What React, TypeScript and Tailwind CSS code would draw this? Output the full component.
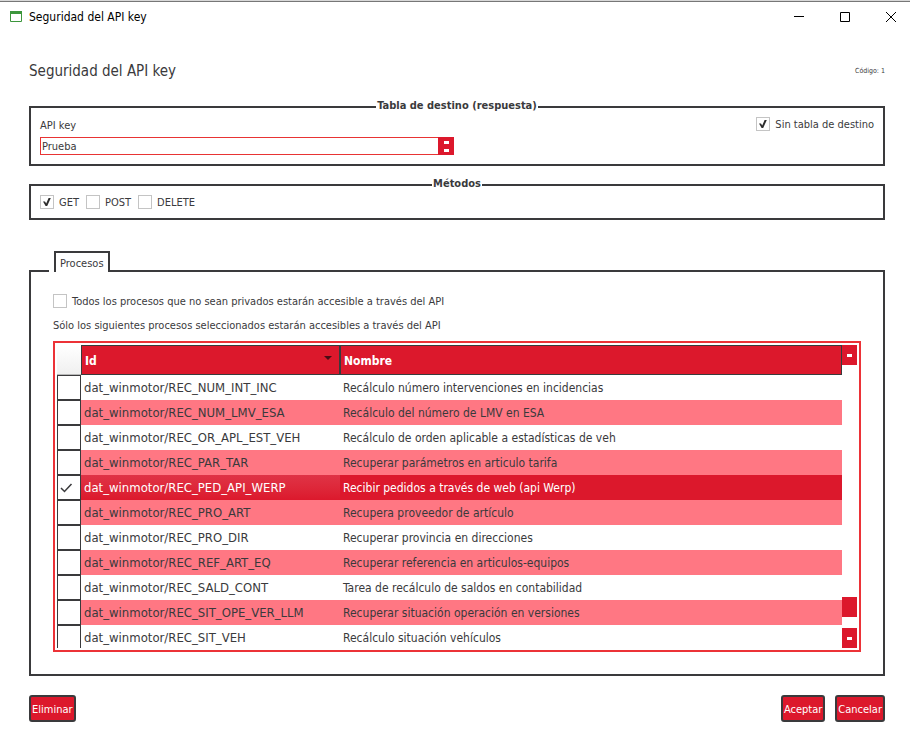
import { useState } from "react";
import type { ReactNode } from "react";

const processes = [
  { id: "dat_winmotor/REC_NUM_INT_INC", name: "Recálculo número intervenciones en incidencias" },
  { id: "dat_winmotor/REC_NUM_LMV_ESA", name: "Recálculo del número de LMV en ESA" },
  { id: "dat_winmotor/REC_OR_APL_EST_VEH", name: "Recálculo de orden aplicable a estadísticas de veh" },
  { id: "dat_winmotor/REC_PAR_TAR", name: "Recuperar parámetros en articulo tarifa" },
  { id: "dat_winmotor/REC_PED_API_WERP", name: "Recibir pedidos a través de web (api Werp)" },
  { id: "dat_winmotor/REC_PRO_ART", name: "Recupera proveedor de artículo" },
  { id: "dat_winmotor/REC_PRO_DIR", name: "Recuperar provincia en direcciones" },
  { id: "dat_winmotor/REC_REF_ART_EQ", name: "Recuperar referencia en articulos-equipos" },
  { id: "dat_winmotor/REC_SALD_CONT", name: "Tarea de recálculo de saldos en contabilidad" },
  { id: "dat_winmotor/REC_SIT_OPE_VER_LLM", name: "Recuperar situación operación en versiones" },
  { id: "dat_winmotor/REC_SIT_VEH", name: "Recálculo situación vehículos" },
];

function CheckBox({ label, defaultChecked = false }: { label: string; defaultChecked?: boolean }) {
  return (
    <label className="flex h-3.5 items-start gap-[5px] leading-4">
      <span className="relative flex size-3.5 shrink-0">
        <input
          type="checkbox"
          defaultChecked={defaultChecked}
          className="peer size-3.5 appearance-none border border-[#c4c4c4] bg-white"
        />
        <svg viewBox="0 0 14 14" className="pointer-events-none absolute inset-0 hidden size-3.5 peer-checked:block">
          <path d="M3 6.5 H5 L6.2 8.6 L8.6 3 H10.8 L7.2 11 H5.6 Z" fill="#2d2d2d" />
        </svg>
      </span>
      <span>{label}</span>
    </label>
  );
}

function Group({ title, children }: { title: string; children: ReactNode }) {
  return (
    <fieldset className="min-w-0 border-2 border-[#3a3a3c] px-[9px] pb-[9px]">
      <legend className="mx-auto px-px pb-0.5 text-[11px] leading-3 font-bold">{title}</legend>
      {children}
    </fieldset>
  );
}

function ActionButton({ children }: { children: ReactNode }) {
  return (
    <button type="button" className="h-[27px] rounded-[3px] border-2 border-[#3a3a3c] bg-[#dc182c] px-px pt-[3px] text-white">
      {children}
    </button>
  );
}

function ScrollStep({ label }: { label: string }) {
  return (
    <button type="button" aria-label={label} className="flex h-5 w-full items-center justify-center bg-[#dc182c]">
      <span className="h-[3px] w-[5px] bg-white" />
    </button>
  );
}

export default function App() {
  const [selected, setSelected] = useState("dat_winmotor/REC_PED_API_WERP");

  return (
    <div className="min-h-screen border-t border-[#d8d8d8] bg-white font-['DejaVu_Sans_Condensed','DejaVu_Sans',sans-serif] text-[11px] text-[#3a3a3c]">
      <header className="flex h-[30px] items-center justify-between border-t border-[#777777] pr-3.5 pl-2.5 text-black">
        <div className="flex items-center gap-[7px]">
          <svg viewBox="0 0 12 12" className="size-3">
            <path d="M0.5 1.5 H11.5 V10.5 H0.5 Z" fill="#fff" stroke="#3c963c" />
            <path d="M0 0 H12 V3 H0 Z" fill="#3c963c" />
          </svg>
          <span className="text-[12px] leading-4">Seguridad del API key</span>
        </div>
        <div className="flex gap-9">
          <button type="button" aria-label="Minimizar">
            <svg viewBox="0 0 10 10" className="size-2.5"><path d="M0 4.5 H10" stroke="#000" /></svg>
          </button>
          <button type="button" aria-label="Maximizar">
            <svg viewBox="0 0 10 10" className="size-2.5"><path d="M0.5 0.5 H9.5 V9.5 H0.5 Z" fill="none" stroke="#000" /></svg>
          </button>
          <button type="button" aria-label="Cerrar">
            <svg viewBox="0 0 10 10" className="size-2.5"><path d="M0 0 L10 10 M10 0 L0 10" stroke="#000" /></svg>
          </button>
        </div>
      </header>

      <main className="pr-[25px] pl-[29px]">
        <div className="mt-[30px] flex items-center justify-between">
          <h1 className="text-[15px] leading-5">Seguridad del API key</h1>
          <span className="text-[7px] leading-5">Código: 1</span>
        </div>

        <div className="mt-[19px] flex flex-col gap-3">
          <Group title="Tabla de destino (respuesta)">
            <div className="flex items-start justify-between pt-[3px]">
              <div className="flex w-[414px] flex-col gap-0.5">
                <label htmlFor="api-key" className="leading-[18px]">API key</label>
                <div className="relative">
                  <select
                    id="api-key"
                    className="block h-[18px] w-full appearance-none border border-[#e83434] bg-white pt-0.5 pl-px leading-[14px]"
                  >
                    <option>Prueba</option>
                  </select>
                  <span className="pointer-events-none absolute inset-y-0 right-0 flex w-4 flex-col items-center justify-center gap-[5px] bg-[#dc182c]">
                    <span className="h-[3px] w-[5px] bg-white" />
                    <span className="h-[3px] w-[5px] bg-white" />
                  </span>
                </div>
              </div>
              <CheckBox label="Sin tabla de destino" defaultChecked />
            </div>
          </Group>

          <Group title="Métodos">
            <div className="flex gap-[7px] pt-[3px]">
              <CheckBox label="GET" defaultChecked />
              <CheckBox label="POST" />
              <CheckBox label="DELETE" />
            </div>
          </Group>
        </div>

        <section className="mt-[31px]">
          <div role="tablist" className="flex items-end">
            <span className="mr-[5px] w-5 border-b-2 border-[#3a3a3c]" />
            <button
              type="button"
              role="tab"
              aria-selected="true"
              className="h-[21px] border-2 border-b-0 border-[#3a3a3c] px-1 pt-[3px] leading-4"
            >
              Procesos
            </button>
            <span className="flex-1 border-b-2 border-[#3a3a3c]" />
          </div>

          <div role="tabpanel" className="border-2 border-t-0 border-[#3a3a3c] p-[22px]">
            <CheckBox label="Todos los procesos que no sean privados estarán accesible a través del API" />
            <p className="mt-[9px] leading-[18px]">
              Sólo los siguientes procesos seleccionados estarán accesibles a través del API
            </p>

            <div className="mt-1.5 flex h-[311px] border-2 border-[#ec3237] p-0.5">
              <div className="min-w-0 flex-1 overflow-hidden">
                <table className="w-full table-fixed border-separate border-spacing-0 text-left text-[12px]">
                  <thead>
                    <tr className="h-[30px] text-white">
                      <th
                        aria-label="Seleccionado"
                        className="w-6 border-b border-[#b8b8b8] bg-linear-to-b from-white to-[#f0f0f0] p-0"
                      />
                      <th className="w-[259px] border border-[#3a3a3c] bg-[#dc182c] px-[3px] pt-0.5 pb-0 font-bold">
                        <span className="flex items-center justify-between pr-1">
                          Id
                          <svg viewBox="0 0 8 4" className="mb-1.5 h-1 w-2"><path d="M0 0 H8 L4 4 Z" fill="#4a0c14" /></svg>
                        </span>
                      </th>
                      <th className="border border-[#3a3a3c] bg-[#dc182c] px-[3px] pt-0.5 pb-0 font-bold">Nombre</th>
                    </tr>
                  </thead>
                  <tbody>
                    {processes.map((process) => {
                      const active = process.id === selected;
                      return (
                        <tr
                          key={process.id}
                          onClick={() => setSelected(process.id)}
                          className={active ? "h-[25px] bg-[#dc182c] text-white" : "h-[25px] even:bg-[#ff7783]"}
                        >
                          <td className="border border-[#3a3a3c] bg-white p-0">
                            <span className="relative block h-[23px]">
                              <input
                                type="checkbox"
                                aria-label={process.name}
                                defaultChecked={active}
                                className="peer block size-full appearance-none"
                              />
                              <svg viewBox="0 0 22 23" className="pointer-events-none absolute inset-0 hidden peer-checked:block">
                                <path d="M3 12 L6.5 15.5 L13.5 8" fill="none" stroke="#3a3a3c" strokeWidth="1.5" />
                              </svg>
                            </span>
                          </td>
                          <td
                            className={
                              active
                                ? "bg-linear-to-b from-[#df3346] to-[#dc182c] px-[3px] pt-px pb-0 text-[13px] leading-4"
                                : "px-[3px] pt-px pb-0 text-[13px] leading-4"
                            }
                          >
                            {process.id}
                          </td>
                          <td className="px-[3px] pt-px pb-0 leading-4">{process.name}</td>
                        </tr>
                      );
                    })}
                  </tbody>
                </table>
              </div>

              <div className="flex w-[15px] flex-col justify-between">
                <ScrollStep label="Subir" />
                <div className="flex flex-col gap-[11px]">
                  <span className="h-5 bg-[#dc182c]" />
                  <ScrollStep label="Bajar" />
                </div>
              </div>
            </div>
          </div>
        </section>

        <footer className="mt-[19px] flex justify-between pb-[26px]">
          <ActionButton>Eliminar</ActionButton>
          <div className="flex gap-2.5">
            <ActionButton>Aceptar</ActionButton>
            <ActionButton>Cancelar</ActionButton>
          </div>
        </footer>
      </main>
    </div>
  );
}
